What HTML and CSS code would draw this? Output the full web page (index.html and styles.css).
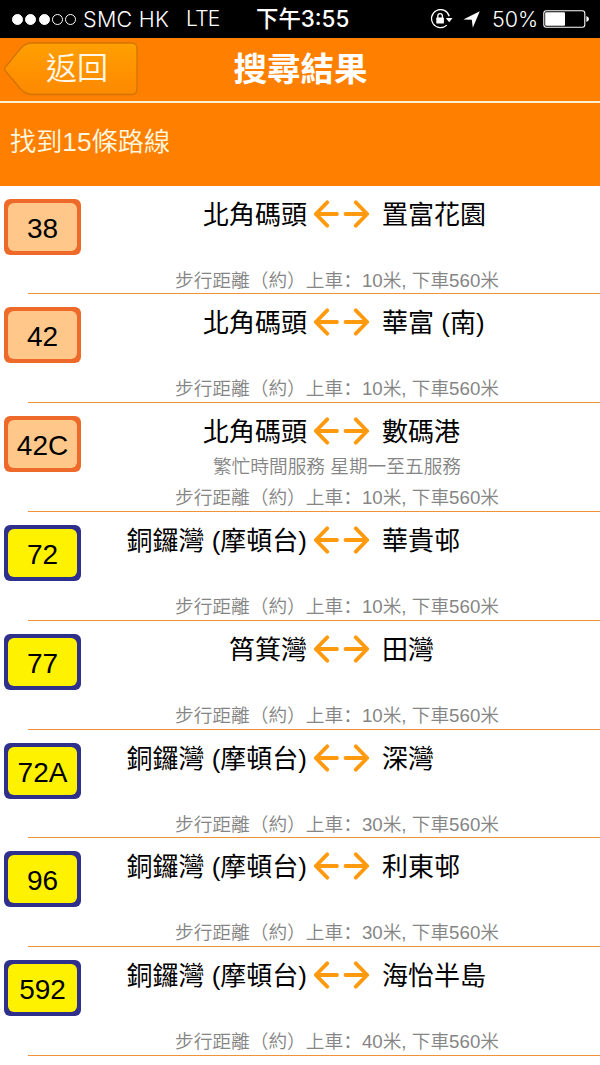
FILE: index.html
```
<!DOCTYPE html>
<html lang="zh-Hant-HK">

<head>
  <meta charset="UTF-8">
  <title>搜尋結果</title>
  <meta name="viewport" content="width=device-width, initial-scale=1.0">
  <link rel="stylesheet" href="styles.css">
</head>

<body>

  <svg width="0" height="0" class="defs">
    <symbol id="arrows" viewBox="0 0 56 28">
      <path d="M13.2 2.3 L1.8 14 L13.2 25.7 M2.5 14 H23 M41.8 2.3 L53.2 14 L41.8 25.7 M31.5 14 H53" fill="none" stroke="#ff990d" stroke-width="3.8" stroke-linecap="round" stroke-linejoin="round"/>
    </symbol>
  </svg>

  <!-- Status bar -->
  <div class="status-bar">
    <div class="signal"><i></i><i></i><i></i><i class="off"></i><i class="off"></i></div>
    <span class="carrier">SMC HK</span>
    <span class="network">LTE</span>
    <span class="clock">下午3:55</span>
    <svg class="lock" width="23" height="20" viewBox="0 0 23 20">
      <path d="M19.2 7.2 A9 9 0 1 0 16.8 16.1" fill="none" stroke="#fff" stroke-width="1.3"/>
      <path d="M15.8 9 H22.5 L19.2 13.2 Z" fill="#fff"/>
      <rect x="6.3" y="8.6" width="7.6" height="6" rx=".6" fill="#fff"/>
      <path d="M7.8 9 V7 a2.3 2.3 0 0 1 4.6 0 V9" fill="none" stroke="#fff" stroke-width="1.3"/>
    </svg>
    <svg class="location" width="17" height="17" viewBox="0 0 17 17">
      <path d="M16.8 .3 L9.8 16.7 L8.8 8.8 L.3 8.4 Z" fill="#fff"/>
    </svg>
    <span class="percent">50%</span>
    <svg class="battery" width="46" height="18" viewBox="0 0 46 18">
      <rect x=".8" y=".8" width="41" height="16.4" rx="2.5" fill="none" stroke="#fff" stroke-width="1.1"/>
      <rect x="2.2" y="2.2" width="19.8" height="13.6" rx="1" fill="#fff"/>
      <path d="M43.4 6 Q46 6.8 46 9 T43.4 12 Z" fill="#fff"/>
    </svg>
  </div>

  <!-- Header -->
  <header>
    <a href="#" class="back">
      <svg width="136" height="54" viewBox="0 0 136 54">
        <defs>
          <linearGradient id="back-fill" x1="0" y1="0" x2="0" y2="1">
            <stop offset="0" stop-color="#ffa000"/>
            <stop offset=".6" stop-color="#ff9100"/>
            <stop offset="1" stop-color="#fb8a00"/>
          </linearGradient>
        </defs>
        <path d="M1 25.5 Q-.2 27 1 28.5 L17 47.5 Q21.5 52.5 28 52.5 H127.5 Q133 52.5 133 47 V6.5 Q133 1 127.5 1 H28 Q21.5 1 17 6 Z" fill="url(#back-fill)" stroke="#d47400" stroke-width="1.3"/>
      </svg>
      <span>返回</span>
    </a>
    <h1>搜尋結果</h1>
  </header>

  <div class="summary">找到15條路線</div>

  <!-- Routes -->
  <ul class="routes">
    <li>
      <div class="number"><span>38</span></div>
      <div class="info">
        <div class="stops"><span class="from">北角碼頭</span><svg><use href="#arrows"/></svg><span>置富花園</span></div>
        <div class="note"></div>
        <div class="walk">步行距離（約）上車<b lang="zh-Hans">：</b>10米, 下車560米</div>
      </div>
    </li>
    <li>
      <div class="number"><span>42</span></div>
      <div class="info">
        <div class="stops"><span class="from">北角碼頭</span><svg><use href="#arrows"/></svg><span>華富 (南)</span></div>
        <div class="note"></div>
        <div class="walk">步行距離（約）上車<b lang="zh-Hans">：</b>10米, 下車560米</div>
      </div>
    </li>
    <li>
      <div class="number"><span>42C</span></div>
      <div class="info">
        <div class="stops"><span class="from">北角碼頭</span><svg><use href="#arrows"/></svg><span>數碼港</span></div>
        <div class="note">繁忙時間服務 星期一至五服務</div>
        <div class="walk">步行距離（約）上車<b lang="zh-Hans">：</b>10米, 下車560米</div>
      </div>
    </li>
    <li>
      <div class="number yellow"><span>72</span></div>
      <div class="info">
        <div class="stops"><span class="from">銅鑼灣 (摩頓台)</span><svg><use href="#arrows"/></svg><span>華貴邨</span></div>
        <div class="note"></div>
        <div class="walk">步行距離（約）上車<b lang="zh-Hans">：</b>10米, 下車560米</div>
      </div>
    </li>
    <li>
      <div class="number yellow"><span>77</span></div>
      <div class="info">
        <div class="stops"><span class="from">筲箕灣</span><svg><use href="#arrows"/></svg><span>田灣</span></div>
        <div class="note"></div>
        <div class="walk">步行距離（約）上車<b lang="zh-Hans">：</b>10米, 下車560米</div>
      </div>
    </li>
    <li>
      <div class="number yellow"><span>72A</span></div>
      <div class="info">
        <div class="stops"><span class="from">銅鑼灣 (摩頓台)</span><svg><use href="#arrows"/></svg><span>深灣</span></div>
        <div class="note"></div>
        <div class="walk">步行距離（約）上車<b lang="zh-Hans">：</b>30米, 下車560米</div>
      </div>
    </li>
    <li>
      <div class="number yellow"><span>96</span></div>
      <div class="info">
        <div class="stops"><span class="from">銅鑼灣 (摩頓台)</span><svg><use href="#arrows"/></svg><span>利東邨</span></div>
        <div class="note"></div>
        <div class="walk">步行距離（約）上車<b lang="zh-Hans">：</b>30米, 下車560米</div>
      </div>
    </li>
    <li>
      <div class="number yellow"><span>592</span></div>
      <div class="info">
        <div class="stops"><span class="from">銅鑼灣 (摩頓台)</span><svg><use href="#arrows"/></svg><span>海怡半島</span></div>
        <div class="note"></div>
        <div class="walk">步行距離（約）上車<b lang="zh-Hans">：</b>40米, 下車560米</div>
      </div>
    </li>
  </ul>

</body>

</html>
```
FILE: styles.css
```
* {
  box-sizing: border-box;
}

body {
  margin: 0;
  height: 1065px;
  overflow: hidden;
  background: #fff;
  font-family: "Liberation Sans", "Noto Sans CJK TC", sans-serif;
  font-weight: 350;
  color: #000;
}

.defs {
  display: block;
}

/* Status bar */
.status-bar {
  display: flex;
  align-items: center;
  height: 38px;
  padding-left: 12px;
  background: #000;
  color: #fff;
  font-family: Inter, "Noto Sans CJK TC", sans-serif;
  font-size: 20.5px;
  line-height: 38px;
  white-space: nowrap;
}

.signal {
  display: flex;
  gap: 2.3px;
  width: 71px;
}

.signal i {
  width: 11px;
  height: 11px;
  border: 1px solid #fff;
  border-radius: 50%;
  background: #fff;
}

.signal .off {
  background: none;
}

.carrier {
  width: 103px;
  font-size: 21.5px;
  letter-spacing: .3px;
}

.network {
  width: 70px;
  font-size: 21px;
  letter-spacing: -.7px;
}

.clock {
  width: 174px;
  font-size: 22.4px;
  font-weight: 500;
}

.lock {
  width: 23px;
  margin-right: 10px;
}

.location {
  margin-right: 12px;
}

.percent {
  width: 51px;
  font-size: 21.5px;
}

/* Header */
header {
  display: grid;
  grid-template-columns: 138px 1fr 138px;
  align-items: center;
  height: 65px;
  padding-bottom: 1px;
  background: #ff8000;
  border-bottom: 2px solid #fff0cf;
  color: #fff;
}

.back {
  display: grid;
  padding-left: 4px;
  color: #fff8e8;
  text-decoration: none;
  font-size: 31px;
  line-height: 54px;
}

.back svg,
.back span {
  grid-area: 1 / 1;
}

.back span {
  padding-left: 42px;
}

h1 {
  margin: 0;
  padding: 2px 0 0 1px;
  text-align: center;
  font-size: 33.5px;
  font-weight: bold;
  line-height: 60px;
}

.summary {
  height: 82.6px;
  padding-left: 10px;
  background: #ff8000;
  color: #fff8e0;
  font-size: 26.2px;
  line-height: 79px;
}

/* Route list */
.routes {
  margin: 0 0 0 28px;
  padding: 0;
  list-style: none;
}

.routes li {
  display: flex;
  height: 108.8px;
  padding-right: 7px;
  border-bottom: 1px solid #f0923a;
}

.number {
  width: 77px;
  height: 56px;
  margin: 13px 0 0 -24px;
  padding: 4px;
  border-radius: 6px;
  background: #ee6a2b;
  text-align: center;
  font-size: 28px;
  line-height: 51px;
}

.number span {
  display: block;
  height: 48px;
  border-radius: 6px;
  background: #ffc88a;
}

.number.yellow {
  background: #2f2f8c;
}

.number.yellow span {
  background: #fff200;
}

.info {
  flex: 1;
}

.stops {
  display: grid;
  grid-template-columns: 226px 55px 1fr;
  column-gap: 7px;
  height: 56px;
  font-size: 26px;
  font-weight: 400;
  line-height: 58px;
  white-space: nowrap;
}

.stops span:last-child {
  padding-left: 6px;
}

.from {
  text-align: right;
}

.stops svg {
  width: 56px;
  height: 28px;
  margin-top: 14px;
}

.note,
.walk {
  height: 30px;
  text-align: center;
  color: #858585;
  font-size: 18.7px;
  line-height: 30px;
}

.note {
  margin-top: -7px;
}

.walk {
  margin-top: -1px;
}

/* left-set fullwidth colon */
.walk b {
  font-family: "Noto Sans CJK SC", sans-serif;
  font-weight: inherit;
}
```
